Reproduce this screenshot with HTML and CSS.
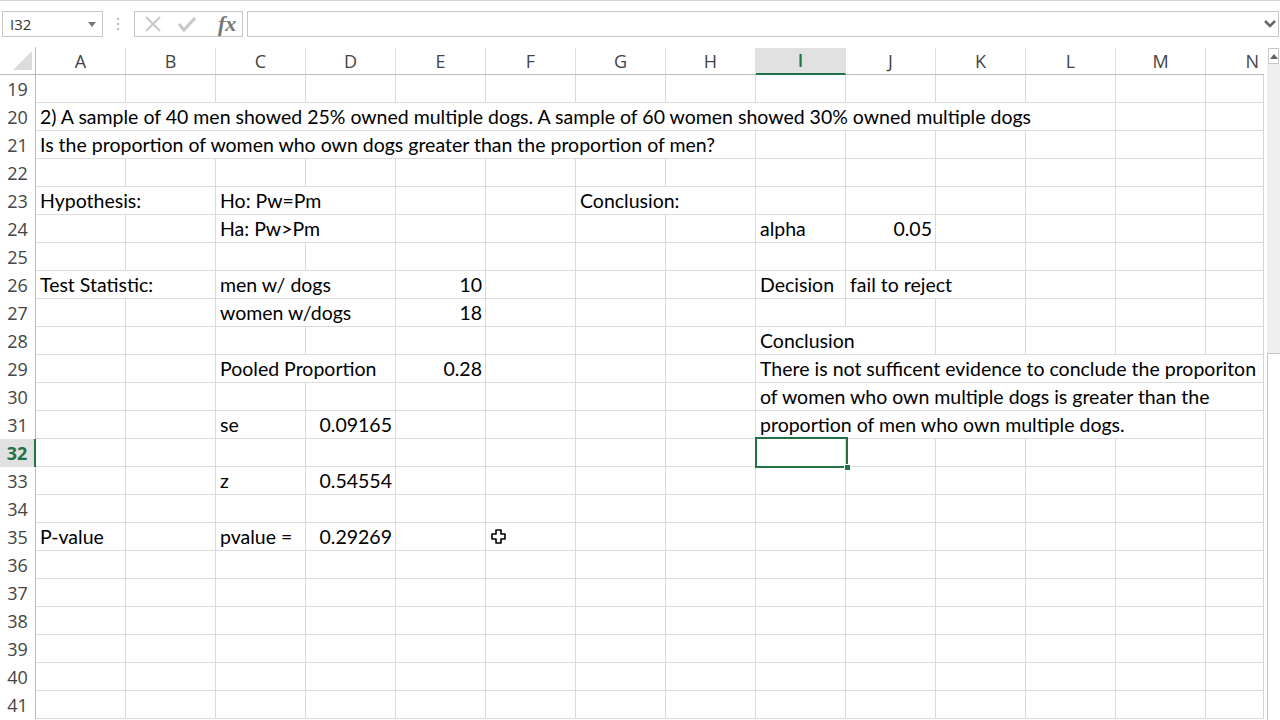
FILE: index.html
```html
<!DOCTYPE html>
<html lang="en">
<head>
    <meta charset="UTF-8">
    <title>Dogs - Two Proportion Test</title>
    <link rel="stylesheet" href="styles.css">
</head>
<body>
    <div class="topbar">
        <div class="namebox">
            <span>I32</span>
            <svg width="8" height="5" viewBox="0 0 8 5"><path d="M0 0h8L4 5z" fill="#777"/></svg>
        </div>
        <div class="grip">
            <svg width="3" height="12" viewBox="0 0 3 12"><rect x="0" y="0" width="2" height="2" fill="#bbb"/><rect x="0" y="5" width="2" height="2" fill="#bbb"/><rect x="0" y="10" width="2" height="2" fill="#bbb"/></svg>
        </div>
        <div class="fxbox">
            <svg class="ico" width="18" height="18" viewBox="0 0 18 18"><path d="M2 2L16 16M16 2L2 16" stroke="#c8c8c8" stroke-width="2"/></svg>
            <svg class="ico" width="20" height="18" viewBox="0 0 20 18"><path d="M2 9l5 6L18 3" stroke="#c8c8c8" stroke-width="3" fill="none"/></svg>
            <span class="fx">fx</span>
        </div>
        <div class="formula">
            <svg width="12" height="8" viewBox="0 0 12 8"><path d="M1 1l5 5 5-5" stroke="#666" stroke-width="2.5" fill="none"/></svg>
        </div>
    </div>

    <div class="sheet-wrap">
        <div class="sheet">
            <div class="colhead">
                <div class="corner"><div class="tri"></div></div>
                <div class="ch">A</div><div class="ch">B</div><div class="ch">C</div><div class="ch">D</div>
                <div class="ch">E</div><div class="ch">F</div><div class="ch">G</div><div class="ch">H</div>
                <div class="ch active">I</div><div class="ch">J</div><div class="ch">K</div><div class="ch">L</div>
                <div class="ch">M</div><div class="ch last">N</div>
            </div>

            <div class="row"><div class="rh">19</div></div>
            <div class="row"><div class="rh">20</div>
                <div class="cell ca w12">2) A sample of 40 men showed 25% owned multiple dogs. A sample of 60 women showed 30% owned multiple dogs</div>
            </div>
            <div class="row"><div class="rh">21</div>
                <div class="cell ca w8">Is the proportion of women who own dogs greater than the proportion of men?</div>
            </div>
            <div class="row"><div class="rh">22</div></div>
            <div class="row"><div class="rh">23</div>
                <div class="cell ca w2">Hypothesis:</div>
                <div class="cell cc w2">Ho: Pw=Pm</div>
                <div class="cell cg w2">Conclusion:</div>
            </div>
            <div class="row"><div class="rh">24</div>
                <div class="cell cc w2">Ha: Pw&gt;Pm</div>
                <div class="cell ci">alpha</div>
                <div class="cell cj num">0.05</div>
            </div>
            <div class="row"><div class="rh">25</div></div>
            <div class="row"><div class="rh">26</div>
                <div class="cell ca w2">Test Statistic:</div>
                <div class="cell cc w2">men w/ dogs</div>
                <div class="cell ce num">10</div>
                <div class="cell ci">Decision</div>
                <div class="cell cj w2">fail to reject</div>
            </div>
            <div class="row"><div class="rh">27</div>
                <div class="cell cc w2">women w/dogs</div>
                <div class="cell ce num">18</div>
            </div>
            <div class="row"><div class="rh">28</div>
                <div class="cell ci w2">Conclusion</div>
            </div>
            <div class="row"><div class="rh">29</div>
                <div class="cell cc w2">Pooled Proportion</div>
                <div class="cell ce num">0.28</div>
                <div class="cell ci w6">There is not sufficent evidence to conclude the proporiton</div>
            </div>
            <div class="row"><div class="rh">30</div>
                <div class="cell ci w6">of women who own multiple dogs is greater than the</div>
            </div>
            <div class="row"><div class="rh">31</div>
                <div class="cell cc">se</div>
                <div class="cell cd num">0.09165</div>
                <div class="cell ci w5">proportion of men who own multiple dogs.</div>
            </div>
            <div class="row"><div class="rh active">32</div>
                <div class="cell ci sel"></div>
            </div>
            <div class="row"><div class="rh">33</div>
                <div class="cell cc">z</div>
                <div class="cell cd num">0.54554</div>
            </div>
            <div class="row"><div class="rh">34</div></div>
            <div class="row"><div class="rh">35</div>
                <div class="cell ca">P-value</div>
                <div class="cell cc">pvalue =</div>
                <div class="cell cd num">0.29269</div>
            </div>
            <div class="row"><div class="rh">36</div></div>
            <div class="row"><div class="rh">37</div></div>
            <div class="row"><div class="rh">38</div></div>
            <div class="row"><div class="rh">39</div></div>
            <div class="row"><div class="rh">40</div></div>
            <div class="row"><div class="rh">41</div></div>
        </div>

        <div class="vscroll">
            <div class="up">
                <svg width="8" height="5" viewBox="0 0 8 5"><path d="M0 5h8L4 0z" fill="#606060"/></svg>
            </div>
            <div class="track"><div class="thumb"></div></div>
        </div>
    </div>

    <!-- mouse pointer over the sheet -->
    <svg class="pointer" width="16" height="16" viewBox="0 0 16 16">
        <path d="M5 1h5v4h4v5h-4v4H5v-4H1V5h4z" fill="#fff" stroke="#000" stroke-width="1.6" stroke-linejoin="round"/>
    </svg>
</body>
</html>
```

FILE: styles.css
```css
body {
    margin: 0;
    background: #fff;
    border-top: 1px solid #d6d6d6;
    font-family: Lato, "Liberation Sans", sans-serif;
    color: #000;
    height: 719px;
    overflow: hidden;
    position: relative;
}

/* formula bar */
.topbar {
    display: flex;
    align-items: flex-start;
    height: 46px;
    padding: 10px 1px 0 2px;
    box-sizing: border-box;
}

.namebox {
    width: 101px;
    height: 26px;
    box-sizing: border-box;
    border: 1px solid #c6c6c6;
    display: flex;
    align-items: center;
    justify-content: space-between;
    padding: 0 6px 0 7px;
    font-family: "Open Sans", sans-serif;
    font-size: 15px;
    color: #333;
}

.grip {
    width: 31px;
    height: 26px;
    display: flex;
    align-items: center;
    justify-content: center;
}

.fxbox {
    width: 109px;
    height: 26px;
    box-sizing: border-box;
    border: 1px solid #c6c6c6;
    display: flex;
    align-items: center;
    padding-left: 9px;
}

.fxbox .ico {
    margin-right: 15px;
}

.fx {
    font-family: "Liberation Serif", serif;
    font-style: italic;
    font-weight: bold;
    font-size: 22px;
    color: #777;
    margin-left: 6px;
    line-height: 1;
}

.formula {
    flex: 1;
    margin-left: 4px;
    height: 26px;
    box-sizing: border-box;
    border: 1px solid #c6c6c6;
    display: flex;
    align-items: center;
    justify-content: flex-end;
    padding-right: 2px;
}

/* sheet */
.sheet-wrap {
    display: flex;
}

.sheet {
    width: 1264px;
}

.colhead,
.row {
    display: grid;
    grid-template-columns: 36px repeat(13, 90px) 57px;
    height: 28px;
    box-sizing: border-box;
}

.colhead {
    border-bottom: 1px solid #bcbcbc;
    font-family: "Open Sans", sans-serif;
    font-size: 18px;
    color: #444;
}

.corner {
    border-right: 1px solid #bcbcbc;
    position: relative;
}

.corner .tri {
    position: absolute;
    right: 3px;
    bottom: 4px;
    width: 19px;
    height: 19px;
    background: #dcdcdc;
    clip-path: polygon(100% 0, 100% 100%, 0 100%);
}

.ch {
    border-right: 1px solid #dedede;
    margin-top: 1px;
    text-align: center;
    line-height: 26px;
}

.ch.last {
    text-align: right;
    padding-right: 4px;
    border-right: none;
}

.ch.active {
    background: #e1e1e1;
    color: #217346;
    font-weight: 600;
    border-bottom: 2px solid #217346;
    margin-bottom: -1px;
    line-height: 24px;
}

.row {
    border-right: 1px solid #d4d4d4;
    border-bottom: 1px solid #dadada;
    background: repeating-linear-gradient(90deg, transparent 0 89px, #dadada 89px 90px);
    background-position: 36px 0;
}

.rh {
    grid-column: 1;
    background: #fff;
    border-right: 1px solid #bcbcbc;
    font-family: "Open Sans", sans-serif;
    font-size: 18px;
    color: #444;
    text-align: center;
    line-height: 28px;
}

.rh.active {
    background: #e1e1e1;
    color: #217346;
    font-weight: bold;
    border-right: 2px solid #217346;
}

.cell {
    background: #fff;
    border-right: 1px solid #dadada;
    padding: 0 4px;
    font-size: 19.5px;
    line-height: 28px;
    height: 27px;
    white-space: nowrap;
    overflow: hidden;
}

.cell.num {
    text-align: right;
    padding-right: 3px;
}

.ca { grid-column-start: 2; }
.cc { grid-column-start: 4; }
.cd { grid-column-start: 5; }
.ce { grid-column-start: 6; }
.cg { grid-column-start: 8; }
.ci { grid-column-start: 10; }
.cj { grid-column-start: 11; }

.w2 { grid-column-end: span 2; }
.w5 { grid-column-end: span 5; }
.w6 { grid-column-end: span 6; }
.w8 { grid-column-end: span 8; }
.w12 { grid-column-end: span 12; }

.cell.w6 {
    border-right: none;
}

.cell.sel {
    background: transparent;
    border-right: none;
    position: relative;
    overflow: visible;
}

.cell.sel::before {
    content: "";
    position: absolute;
    left: -1px;
    top: -2px;
    right: -2px;
    bottom: -2px;
    border: 2px solid #217346;
    z-index: 2;
}

.cell.sel::after {
    content: "";
    position: absolute;
    right: -5px;
    bottom: -5px;
    width: 5px;
    height: 5px;
    background: #217346;
    border: 1px solid #fff;
    z-index: 3;
}

/* vertical scrollbar */
.vscroll {
    width: 16px;
    display: flex;
    flex-direction: column;
}

.up {
    height: 16px;
    margin: 1px 1px 0 4px;
    box-sizing: border-box;
    border: 1px solid #c6c6c6;
    display: flex;
    align-items: center;
    justify-content: center;
}

.track {
    flex: 1;
    margin-left: 3px;
    background: #efefef;
    padding-top: 289px;
}

.thumb {
    height: 400px;
    background: #fff;
    border: 1px solid #c6c6c6;
    border-right: none;
}

.pointer {
    position: absolute;
    left: 491px;
    top: 528px;
}
```
